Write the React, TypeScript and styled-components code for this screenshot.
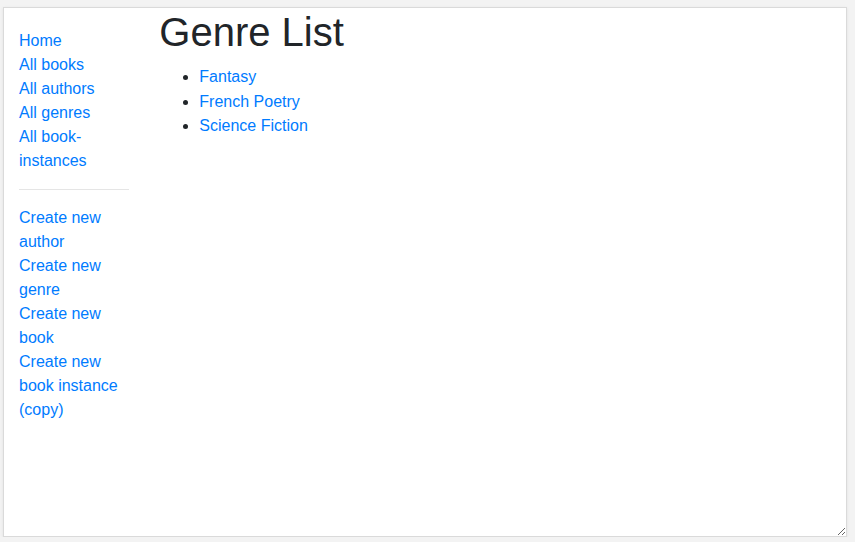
import React from "react";
import styled, { createGlobalStyle } from "styled-components";

const GlobalStyle = createGlobalStyle`
  html, body {
    margin: 0;
    padding: 0;
    background: #f3f3f3;
  }
  body {
    font-family: "Liberation Sans", Arial, sans-serif;
    font-size: 16px;
    line-height: 1.5;
    color: #212529;
  }
  * { box-sizing: border-box; }
`;

const Frame = styled.div`
  margin: 7px 8px 0 3px;
  width: 844px;
  height: 530px;
  background: #fff;
  border: 1px solid #dadada;
  box-shadow: 0 1px 3px rgba(0, 0, 0, 0.08);
  resize: both;
  overflow: auto;
`;

const Row = styled.div`
  display: flex;
`;

const SideCol = styled.div`
  flex: 0 0 16.6667%;
  max-width: 16.6667%;
  padding: 0 15px;
`;

const MainCol = styled.div`
  flex: 0 0 83.3333%;
  max-width: 83.3333%;
  padding: 0 15px;
`;

const SidebarNav = styled.ul`
  margin: 21px 0 16px;
  padding: 0;
  list-style: none;
`;

const Link = styled.a`
  color: #007bff;
  text-decoration: none;
`;

const Divider = styled.hr`
  margin: 16px 0;
  border: 0;
  border-top: 1px solid rgba(0, 0, 0, 0.1);
`;

const Title = styled.h1`
  margin: 0 0 8px;
  font-size: 40px;
  font-weight: 500;
  line-height: 1.2;
`;

const GenreList = styled.ul`
  margin: 0 0 16px;
  padding: 1px 0 0 40px;
`;

const GenreItem = styled.li`
  line-height: 24.5px;
`;

const sideLinks = ["Home", "All books", "All authors", "All genres", "All book-instances"];
const createLinks = [
  "Create new author",
  "Create new genre",
  "Create new book",
  "Create new book instance (copy)",
];
const genres = ["Fantasy", "French Poetry", "Science Fiction"];

export default function App() {
  return (
    <>
      <GlobalStyle />
      <Frame>
        <Row>
          <SideCol>
            <SidebarNav>
              {sideLinks.map((l) => (
                <li key={l}>
                  <Link href="#">{l}</Link>
                </li>
              ))}
              <li>
                <Divider />
              </li>
              {createLinks.map((l) => (
                <li key={l}>
                  <Link href="#">{l}</Link>
                </li>
              ))}
            </SidebarNav>
          </SideCol>
          <MainCol>
            <Title>Genre List</Title>
            <GenreList>
              {genres.map((g) => (
                <GenreItem key={g}>
                  <Link href="#">{g}</Link>
                </GenreItem>
              ))}
            </GenreList>
          </MainCol>
        </Row>
      </Frame>
    </>
  );
}
